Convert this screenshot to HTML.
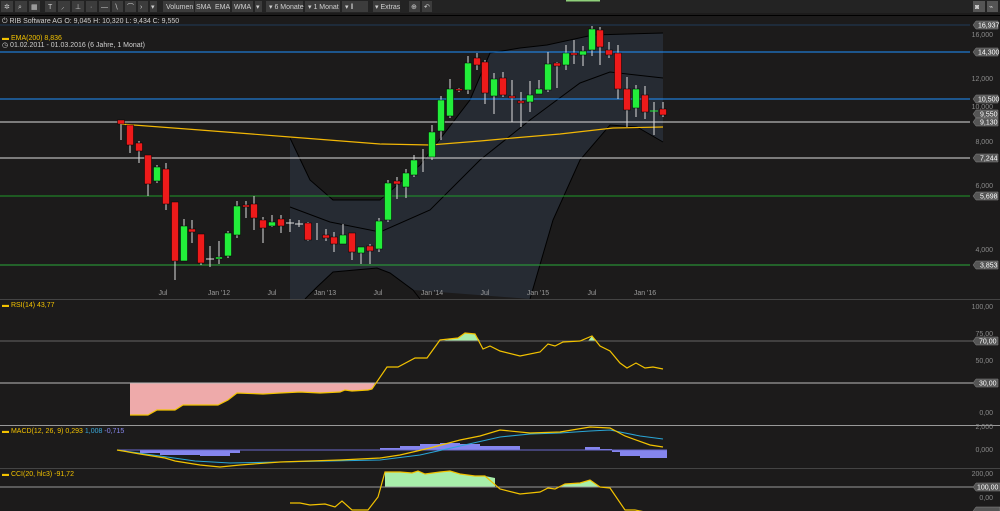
<!DOCTYPE html>
<html><head><meta charset="utf-8"><style>
html,body{margin:0;padding:0;background:#1c1b1b;width:1000px;height:511px;overflow:hidden}
svg{display:block}
text{font-family:"Liberation Sans",sans-serif;font-size:7px}
</style></head><body>
<svg width="1000" height="511" viewBox="0 0 1000 511" xmlns="http://www.w3.org/2000/svg">
<rect width="1000" height="511" fill="#1c1b1b"/>
<!-- toolbar -->
<rect x="0" y="0" width="1000" height="13" fill="#232323"/>
<rect x="566" y="0" width="34" height="1.5" fill="#8fd07a"/>
<g fill="#3c3c3c">
<rect x="1" y="1" width="12" height="11"/><rect x="15" y="1" width="12" height="11"/><rect x="29" y="1" width="11" height="11"/>
<rect x="45" y="1" width="11" height="11"/><rect x="58" y="1" width="12" height="11"/><rect x="72" y="1" width="12" height="11"/><rect x="86" y="1" width="11" height="11"/><rect x="99" y="1" width="11" height="11"/><rect x="112" y="1" width="11" height="11"/><rect x="125" y="1" width="11" height="11"/><rect x="138" y="1" width="10" height="11"/><rect x="150" y="1" width="7" height="11"/>
<rect x="163" y="1" width="31" height="11"/><rect x="195" y="1" width="21" height="11"/><rect x="210" y="1" width="20" height="11"/><rect x="232" y="1" width="21" height="11"/><rect x="255" y="1" width="7" height="11"/>
<rect x="266" y="1" width="37" height="11"/><rect x="305" y="1" width="35" height="11"/><rect x="342" y="1" width="26" height="11"/><rect x="373" y="1" width="27" height="11"/>
<rect x="409" y="1" width="11" height="11"/><rect x="422" y="1" width="10" height="11"/>
<rect x="973" y="1" width="12" height="11" fill="#555"/><rect x="987" y="1" width="11" height="11" fill="#555"/>
</g>
<g fill="#cfcfcf" font-size="6">
<text x="4" y="9">✲</text><text x="18" y="9">⌕</text><text x="31" y="9">▦</text><text x="48" y="9">T</text><text x="61" y="9">⸝</text><text x="75" y="9">⊥</text><text x="90" y="9">·</text><text x="101" y="9">—</text><text x="114" y="9">∖</text><text x="127" y="9">⌒</text><text x="140" y="9">›</text><text x="151" y="9">▾</text>
<text x="166" y="9">Volumen</text><text x="196" y="9">SMA</text><text x="215" y="9">EMA</text><text x="234" y="9">WMA</text><text x="256" y="9">▾</text>
<text x="269" y="9">▾ 6 Monate</text><text x="308" y="9">▾ 1 Monat</text><text x="345" y="9">▾   ‖</text><text x="375" y="9">▾ Extras</text><text x="411" y="9">⊕</text><text x="424" y="9">↶</text>
<text x="975" y="9">◙</text><text x="989" y="9">⌁</text>
</g>
<line x1="0" y1="15.5" x2="1000" y2="15.5" stroke="#000" stroke-width="1"/>
<!-- bollinger shaded -->
<path d="M290,138 L310,180 L333,200 L380,200 L420,165 L470,100 L490,53 L520,48 L547,45 L593,35 L663,33 L663,142 L637,127 L610,125 L580,160 L553,220 L530,299 L413,290 L390,273 L377,268 L333,272 L317,287 L305,299 L290,299 Z" fill="#262b33"/>
<g fill="none" stroke="#000" stroke-width="1">
<path d="M290,138 L310,180 L333,200 L380,200 L420,165 L470,100 L490,53 L520,48 L547,45 L593,35 L663,33"/>
<path d="M290,207 L330,222 L380,232 L430,210 L480,160 L530,120 L580,83 L610,72 L663,78"/>
<path d="M305,299 L317,287 L333,272 L377,268 L390,273 L413,290 L420,299 M530,299 L553,220 L580,160 L610,125 L637,127 L663,142"/>
</g>
<!-- horizontal lines -->
<line x1="0" y1="25" x2="970" y2="25" stroke="#1f3b5a"/>
<line x1="0" y1="52" x2="970" y2="52" stroke="#1e90ff"/>
<line x1="0" y1="99" x2="970" y2="99" stroke="#1e90ff"/>
<line x1="0" y1="122" x2="970" y2="122" stroke="#ddd"/>
<line x1="0" y1="158" x2="970" y2="158" stroke="#ddd"/>
<line x1="0" y1="196" x2="970" y2="196" stroke="#1f9a2a"/>
<line x1="0" y1="265" x2="970" y2="265" stroke="#2aa83a"/>
<!-- EMA -->
<path d="M120,124 L200,130 L290,137 L380,144 L430,145 L480,141 L513,138 L560,134 L613,128 L663,127" fill="none" stroke="#f2b705" stroke-width="1.2"/>
<!-- candles wicks -->
<g stroke="#ddd" stroke-width="1">
<path d="M121,120V140M130,125V153M139,141V163M148,155V196M157,165V183M166,163V210M175,202V280M184,219V261M192,220V243M201,234V265M210,246V267M219,241V264M228,231V258M237,201V238M246,201V218M254,196V230M263,217V243M272,215V227M281,215V233M290,219V232M299,220V227M308,222V241M317,223V240M326,229V241M334,232V252M343,224V244M352,233V260M361,247V264M370,244V264M379,218V252M388,180V222M397,177V199M406,169V198M414,155V177M423,149V172M432,125V160M441,96V140M450,79V118M459,88V92M468,56V94M477,53V70M485,60V104M494,73V114M503,72V97M512,80V122M521,92V127M530,81V112M539,80V94M548,52V92M557,62V88M566,45V70M574,40V64M583,46V66M592,26V56M600,27V65M609,42V58M618,45V99M627,77V127M636,85V117M645,86V119M654,102V135M663,102V117"/>
</g>
<g fill="#ee1a1a" stroke="#000" stroke-width="0.5">
<rect x="117.5" y="120" width="7" height="4"/><rect x="126.5" y="125" width="7" height="20"/><rect x="135.5" y="143" width="7" height="8"/><rect x="144.5" y="155" width="7" height="29"/><rect x="162.5" y="169" width="7" height="35"/><rect x="171.5" y="202" width="7" height="59"/><rect x="188.5" y="229" width="7" height="3"/><rect x="197.5" y="234" width="7" height="29"/><rect x="242.5" y="205" width="7" height="2"/><rect x="250.5" y="204" width="7" height="14"/><rect x="259.5" y="220" width="7" height="8"/><rect x="277.5" y="219" width="7" height="7"/><rect x="304.5" y="223" width="7" height="17"/><rect x="322.5" y="235" width="7" height="3"/><rect x="330.5" y="237" width="7" height="7"/><rect x="348.5" y="233" width="7" height="19"/><rect x="366.5" y="246" width="7" height="5"/><rect x="393.5" y="181" width="7" height="3"/><rect x="455.5" y="89" width="7" height="1.5"/><rect x="473.5" y="58" width="7" height="7"/><rect x="481.5" y="62" width="7" height="31"/><rect x="499.5" y="78" width="7" height="17"/><rect x="508.5" y="96" width="7" height="2"/><rect x="517.5" y="101" width="7" height="2"/><rect x="553.5" y="63" width="7" height="3"/><rect x="570.5" y="53" width="7" height="2"/><rect x="596.5" y="30" width="7" height="17"/><rect x="605.5" y="50" width="7" height="5"/><rect x="614.5" y="53" width="7" height="36"/><rect x="623.5" y="89" width="7" height="21"/><rect x="641.5" y="95" width="7" height="17"/><rect x="659.5" y="109" width="7" height="6"/>
</g>
<g fill="#22ee3a" stroke="#000" stroke-width="0.5">
<rect x="153.5" y="167" width="7" height="14"/><rect x="180.5" y="226" width="7" height="35"/><rect x="215.5" y="257" width="7" height="2"/><rect x="224.5" y="233" width="7" height="23"/><rect x="233.5" y="206" width="7" height="29"/><rect x="268.5" y="222" width="7" height="4"/><rect x="339.5" y="235" width="7" height="9"/><rect x="357.5" y="247" width="7" height="6"/><rect x="375.5" y="221" width="7" height="28"/><rect x="384.5" y="183" width="7" height="37"/><rect x="402.5" y="173" width="7" height="14"/><rect x="410.5" y="160" width="7" height="15"/><rect x="428.5" y="132" width="7" height="25"/><rect x="437.5" y="100" width="7" height="31"/><rect x="446.5" y="89" width="7" height="27"/><rect x="464.5" y="63" width="7" height="27"/><rect x="490.5" y="79" width="7" height="17"/><rect x="526.5" y="95" width="7" height="7"/><rect x="535.5" y="89" width="7" height="5"/><rect x="544.5" y="64" width="7" height="26"/><rect x="562.5" y="53" width="7" height="12"/><rect x="579.5" y="51" width="7" height="4"/><rect x="588.5" y="29" width="7" height="21"/><rect x="632.5" y="89" width="7" height="19"/>
</g>
<g stroke="#ddd"><path d="M206,259H214M286,223H294M295,224H303M419,158H427"/></g>
<path d="M650,111H658" stroke="#22ee3a"/>
<!-- info -->
<text x="2" y="23" fill="#cfcfcf">⏻ RIB Software AG  O: 9,045  H: 10,320  L: 9,434  C: 9,550</text>
<text x="2" y="40" fill="#f2c200">▬ EMA(200)  8,836</text>
<text x="2" y="47" fill="#cfcfcf">◷ 01.02.2011 - 01.03.2016 (6 Jahre, 1 Monat)</text>
<!-- right axis main -->
<g fill="#8a8a8a" text-anchor="end">
<text x="993" y="37">16,000</text><text x="993" y="81">12,000</text><text x="993" y="109">10,000</text><text x="993" y="144">8,000</text><text x="993" y="188">6,000</text><text x="993" y="252">4,000</text>
</g>
<g fill="#555" stroke="#888" stroke-width="0.5">
<path d="M973,25l3,-4h22v8h-22z"/><path d="M973,52l3,-4h22v8h-22z"/><path d="M973,99l3,-4h22v8h-22z"/><path d="M973,114l3,-4h22v8h-22z"/><path d="M973,122l3,-4h22v8h-22z"/><path d="M973,158l3,-4h22v8h-22z"/><path d="M973,196l3,-4h22v8h-22z"/><path d="M973,265l3,-4h22v8h-22z"/>
</g>
<g fill="#fff" font-size="6.5">
<text x="978" y="27.5">16,937</text><text x="978" y="54.5">14,300</text><text x="978" y="101.5">10,500</text><text x="980" y="116.5">9,550</text><text x="980" y="124.5">9,130</text><text x="980" y="160.5">7,244</text><text x="980" y="198.5">5,698</text><text x="980" y="267.5">3,853</text>
</g>
<!-- x axis -->
<g fill="#9a9a9a" text-anchor="middle">
<text x="163" y="295">Jul</text><text x="219" y="295">Jan '12</text><text x="272" y="295">Jul</text><text x="325" y="295">Jan '13</text><text x="378" y="295">Jul</text><text x="432" y="295">Jan '14</text><text x="485" y="295">Jul</text><text x="538" y="295">Jan '15</text><text x="592" y="295">Jul</text><text x="645" y="295">Jan '16</text>
</g>
<line x1="0" y1="299.5" x2="1000" y2="299.5" stroke="#444"/>
<!-- RSI -->
<text x="2" y="307" fill="#f2c200">▬ RSI(14)  43,77</text>
<path d="M130,383 L130,415 L148,415 L157,410 L175,410 L183,405 L218,405 L228,400 L237,393 L263,394 L280,393 L300,392 L320,393 L340,392 L345,390 L352,391 L368,390 L372,389 L375,383 Z" fill="#eeaaaa"/>
<path d="M440,341 L458,338 L465,333 L475,334 L480,341 Z M588,341 L592,336 L597,341 Z" fill="#a8eeaa"/>
<line x1="0" y1="341" x2="975" y2="341" stroke="#666"/>
<line x1="0" y1="383" x2="975" y2="383" stroke="#bbb"/>
<path d="M130,415 L148,415 L157,410 L175,410 L183,405 L218,405 L228,400 L237,393 L263,394 L280,393 L300,392 L320,393 L340,392 L345,390 L352,391 L368,390 L372,389 L387,367 L398,367 L415,358 L427,358 L440,340 L458,338 L465,333 L475,334 L483,349 L490,346 L500,351 L520,356 L540,352 L548,344 L555,346 L563,342 L580,341 L592,336 L600,346 L610,351 L620,363 L627,368 L636,363 L645,368 L653,367 L663,369" fill="none" stroke="#f2c200" stroke-width="1.2"/>
<g fill="#8a8a8a" text-anchor="end"><text x="993" y="309">100,00</text><text x="993" y="336">75,00</text><text x="993" y="363">50,00</text><text x="993" y="415">0,00</text></g>
<g fill="#555" stroke="#888" stroke-width="0.5"><path d="M973,341l3,-4h22v8h-22z"/><path d="M973,383l3,-4h22v8h-22z"/></g>
<g fill="#fff" font-size="6.5"><text x="979" y="343.5">70,00</text><text x="979" y="385.5">30,00</text></g>
<line x1="0" y1="425.5" x2="1000" y2="425.5" stroke="#999"/>
<!-- MACD -->
<text x="2" y="433" fill="#f2c200">▬ MACD(12, 26, 9)  0,293  <tspan fill="#3aa8d8">1,008</tspan>  <tspan fill="#8888ee">-0,715</tspan></text>
<path d="M140,450 L140,453 L160,453 L160,455 L200,455 L200,456 L230,456 L230,453 L240,453 L240,450 Z M380,450 L380,448 L400,448 L400,446 L420,446 L420,444 L440,444 L440,443 L460,443 L460,444 L480,444 L480,446 L500,446 L500,446 L520,446 L520,450 Z M585,450 L585,447 L600,447 L600,449 L612,449 L612,452 L620,452 L620,456 L640,456 L640,458 L667,458 L667,450 Z" fill="#8585ee"/>
<line x1="117" y1="450" x2="667" y2="450" stroke="#6a6acc"/>
<path d="M117,450 L160,456 L195,461 L230,463 L280,462 L380,460 L420,455 L460,446 L500,437 L530,434 L560,433 L590,431 L610,430 L640,436 L663,439" fill="none" stroke="#2aa6d6" stroke-width="1.1"/>
<path d="M117,450 L140,454 L165,458 L175,461 L200,465 L220,467 L240,465 L280,462 L340,460 L380,458 L400,455 L430,448 L460,440 L480,436 L500,430 L530,433 L560,432 L590,427 L610,428 L625,436 L650,445 L663,447" fill="none" stroke="#f2c200" stroke-width="1.2"/>
<g fill="#8a8a8a" text-anchor="end"><text x="993" y="429">2,000</text><text x="993" y="452">0,000</text></g>
<line x1="0" y1="468.5" x2="1000" y2="468.5" stroke="#444"/>
<!-- CCI -->
<text x="2" y="476" fill="#f2c200">▬ CCI(20, hlc3)  -91,72</text>
<path d="M385,487 L385,472 L400,472 L412,473 L418,471 L425,474 L440,472 L450,471 L460,474 L475,476 L485,476 L495,478 L495,487 Z M560,487 L565,484 L580,483 L590,480 L600,487 Z" fill="#a8eeaa"/>
<line x1="0" y1="487" x2="975" y2="487" stroke="#999"/>
<path d="M290,503 L300,503 L310,505 L325,504 L335,507 L342,501 L352,510 L368,510 L378,497 L385,472 L400,472 L412,473 L418,471 L425,474 L440,472 L450,471 L460,474 L475,476 L485,476 L500,489 L520,494 L540,492 L548,488 L555,489 L565,484 L580,483 L590,480 L600,487 L610,488 L625,510 L635,510 L645,512" fill="none" stroke="#f2c200" stroke-width="1.2"/>
<g fill="#8a8a8a" text-anchor="end"><text x="993" y="476">200,00</text><text x="993" y="500">0,00</text></g>
<g fill="#555" stroke="#888" stroke-width="0.5"><path d="M973,487l3,-4h24v8h-24z"/><path d="M973,511l3,-4h24v8h-24z"/></g>
<g fill="#fff" font-size="6.5"><text x="977" y="489.5">100,00</text></g>
</svg>
</body></html>
